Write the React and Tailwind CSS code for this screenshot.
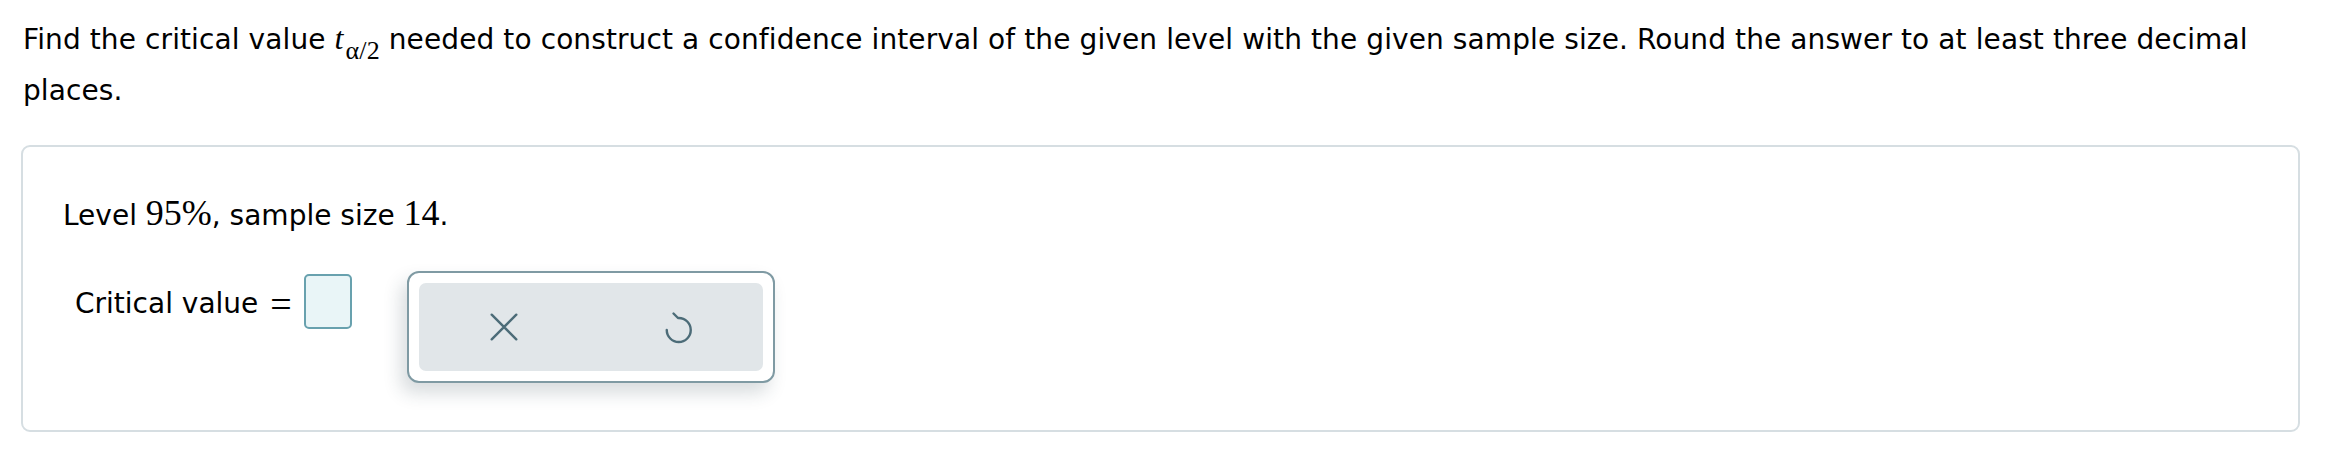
export default function App() {
  return (
    <div className="min-h-[476px] w-[2346px] bg-white text-black" style={{ fontFamily: '"DejaVu Sans", Verdana, sans-serif' }}>
      <p className="w-[2270px] pl-[23px] pt-[14px] text-[28px] leading-[51px] tracking-[0.1px]">
        Find the critical value{" "}
        <span className="whitespace-nowrap leading-none" style={{ fontFamily: '"Liberation Serif", serif' }}>
          <span className="text-[32px] italic leading-none">t</span>
          <span className="relative top-[10px] ml-[2px] text-[26px] leading-none">α/2</span>
        </span>{" "}
        needed to construct a confidence interval of the given level with the given sample size. Round the answer to at least three decimal places.
      </p>

      <div className="ml-[21px] mt-[29px] h-[287px] w-[2279px] rounded-[9px] border-2 border-[#d6dee2] bg-white pl-[40px] pt-[48px]">
        <p className="text-[28px] leading-[36px]">
          Level <span className="text-[36px] leading-none" style={{ fontFamily: '"Liberation Serif", serif' }}>95%</span>, sample size{" "}
          <span className="text-[36px] leading-none" style={{ fontFamily: '"Liberation Serif", serif' }}>14</span>.
        </p>

        <div className="ml-[12px] mt-[37px] flex items-start">
          <div className="mt-[15px] flex items-center text-[28px] leading-[36px]">
            <span>Critical value</span>
            <span className="ml-[12px] text-[38px] leading-[36px]" style={{ fontFamily: '"Liberation Serif", serif' }}>=</span>
          </div>
          <div className="ml-[12px] mt-[3px] h-[55px] w-[48px] rounded-[5px] border-2 border-[#68a1ae] bg-[#e9f5f7]" />

          <div className="ml-[55px] rounded-[12px] border-2 border-[#7f9aa3] bg-white p-[10px] shadow-[-6px_10px_18px_rgba(40,60,70,0.18)]">
            <div className="flex h-[88px] w-[344px] items-center justify-between rounded-[7px] bg-[#e1e6e9] px-[63px]">
              <button className="flex h-[44px] w-[44px] items-center justify-center text-[#4c6c78]">
                <svg width="36" height="36" viewBox="0 0 24 24" fill="none" stroke="currentColor" strokeWidth="1.6" strokeLinecap="round">
                  <path d="M3.8 3.8 L20.2 20.2 M20.2 3.8 L3.8 20.2" />
                </svg>
              </button>
              <button className="flex h-[44px] w-[44px] items-center justify-center text-[#4c6c78]">
                <svg width="36" height="36" viewBox="0 0 24 24" fill="none" stroke="currentColor" strokeWidth="1.6" strokeLinecap="round" strokeLinejoin="round">
                  <path d="M9 3 L12 6 H12.5 A8 8 0 1 1 4.5 14" />
                </svg>
              </button>
            </div>
          </div>
        </div>
      </div>
    </div>
  );
}
